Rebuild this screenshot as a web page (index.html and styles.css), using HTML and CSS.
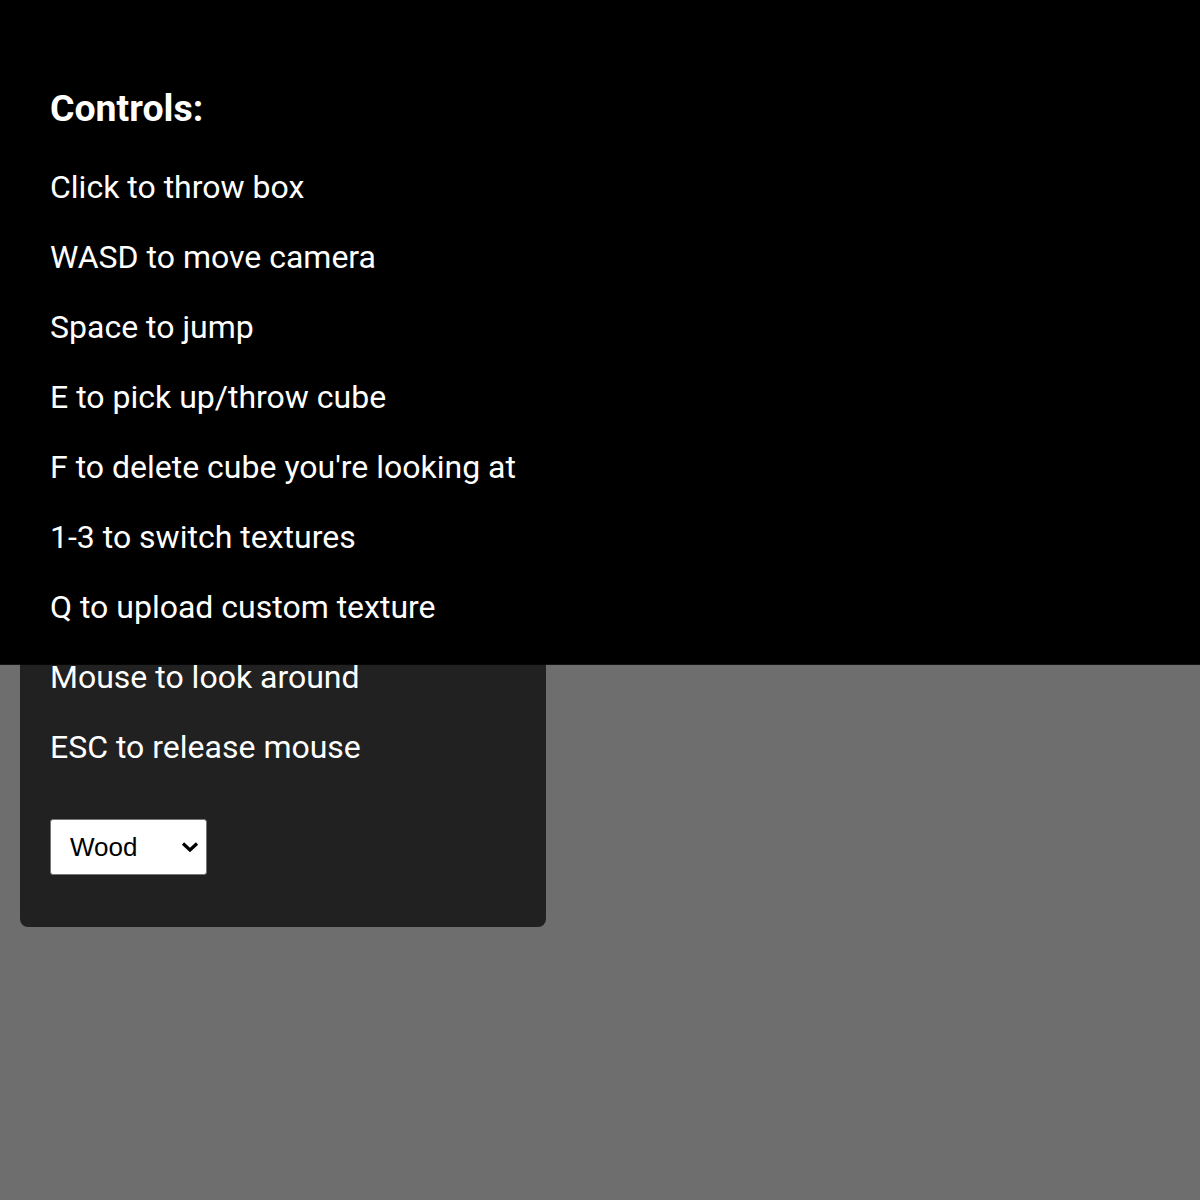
FILE: index.html
```html
<!DOCTYPE html>
<html lang="en">
<head>
    <meta charset="UTF-8">
    <meta name="viewport" content="width=device-width, initial-scale=1.0">
    <title>Box Thrower</title>
    <link rel="stylesheet" href="styles.css">
</head>
<body>
    <div class="scene">
        <div class="sky"></div>
        <div class="ground"></div>
    </div>

    <div class="controls">
        <h3>Controls:</h3>
        <p>Click to throw box</p>
        <p>WASD to move camera</p>
        <p>Space to jump</p>
        <p>E to pick up/throw cube</p>
        <p>F to delete cube you're looking at</p>
        <p>1-3 to switch textures</p>
        <p>Q to upload custom texture</p>
        <p>Mouse to look around</p>
        <p>ESC to release mouse</p>
        <div class="texture-picker">
            <select id="textureSelect">
                <option value="wood">Wood</option>
                <option value="metal">Metal</option>
                <option value="stone">Stone</option>
            </select>
            <svg class="chevron" width="18" height="12" viewBox="0 0 18 12">
                <path d="M2 2.5 L9 9 L16 2.5" fill="none" stroke="#000" stroke-width="3.2"/>
            </svg>
        </div>
    </div>
</body>
</html>
```

FILE: styles.css
```css
/* Base */
* {
    box-sizing: border-box;
}

body {
    margin: 0;
    font-family: Roboto, "Liberation Sans", sans-serif;
    font-size: 32px;
    overflow: hidden;
    height: 100vh;
}

/* Scene background */
.scene {
    display: flex;
    flex-direction: column;
    height: 100%;
}

.sky {
    height: 665px;
    background: #000;
    border-bottom: 1px solid #141414;
}

.ground {
    flex: 1;
    background: #6e6e6e;
}

/* Controls overlay */
.controls {
    position: absolute;
    top: 19px;
    left: 20px;
    padding: 30px;
    background: rgba(0, 0, 0, 0.7);
    border-radius: 8px;
    color: white;
}

.controls h3 {
    font-size: 1.17em;
    font-weight: 700;
}

.texture-picker {
    position: relative;
    width: 157px;
    margin-top: 53px;
    margin-bottom: 22px;
}

.texture-picker select {
    display: block;
    width: 157px;
    height: 56px;
    padding: 0 30px 0 19px;
    appearance: none;
    font-family: "Liberation Sans", Arial, sans-serif;
    font-size: 26px;
    color: #000;
    background: white;
    border: 1px solid #767676;
    border-radius: 3px;
}

.chevron {
    position: absolute;
    top: 22px;
    left: 131px;
    pointer-events: none;
}
```
